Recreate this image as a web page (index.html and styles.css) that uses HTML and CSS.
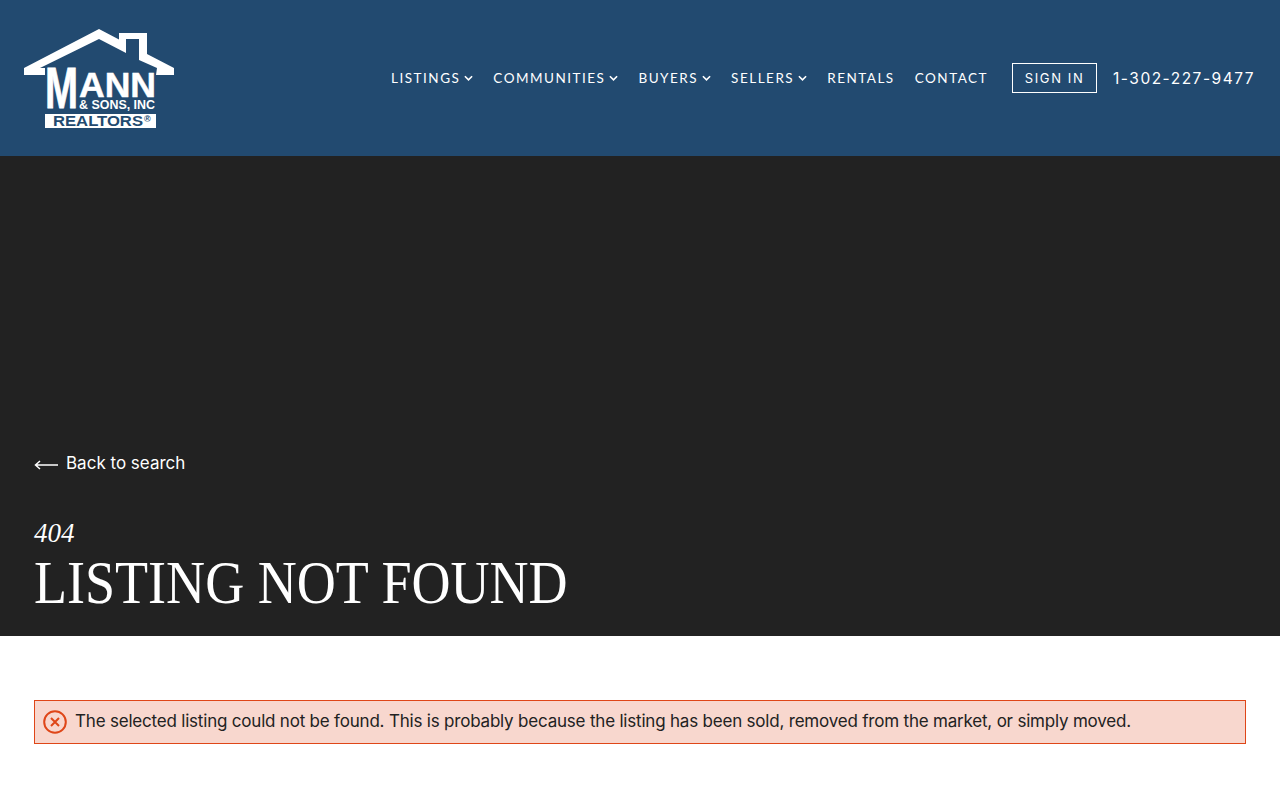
FILE: index.html
```html
<!DOCTYPE html>
<html lang="en">
<head>
  <meta charset="UTF-8" />
  <title>Listing Not Found</title>
  <link rel="stylesheet" href="styles.css">
</head>
<body>

  <!-- Header -->
  <header class="site-header">
    <a class="logo" href="#">
      <svg width="150" height="100" viewBox="24 28 150 100">
        <path fill="#fff" d="M24 68 L99 29 L119 39.5 L119 33 L147 33 L147 54 L174 68 L174 75 L156 75 L157 68 L139 60 L139 39 L126 39 L126 53 L99 39 L40 68 L45 68 L45 75 L24 75 Z"/>
        <rect x="45" y="114" width="111" height="14" fill="#fff"/>
        <text class="logo-m" x="45" y="108" textLength="33" lengthAdjust="spacingAndGlyphs">M</text>
        <text class="logo-ann" x="79" y="97" textLength="77" lengthAdjust="spacingAndGlyphs">ANN</text>
        <text class="logo-sons" x="79" y="109" textLength="76" lengthAdjust="spacingAndGlyphs">&amp; SONS, INC</text>
        <text class="logo-realtors" x="53" y="126" textLength="90" lengthAdjust="spacingAndGlyphs">REALTORS</text>
        <text class="logo-reg" x="144" y="122">®</text>
      </svg>
    </a>
    <nav class="main-nav">
      <a class="nav-link" href="#">LISTINGS<svg class="chev" viewBox="0 0 10 6"><path d="M1 1l4 4 4-4"/></svg></a>
      <a class="nav-link" href="#">COMMUNITIES<svg class="chev" viewBox="0 0 10 6"><path d="M1 1l4 4 4-4"/></svg></a>
      <a class="nav-link" href="#">BUYERS<svg class="chev" viewBox="0 0 10 6"><path d="M1 1l4 4 4-4"/></svg></a>
      <a class="nav-link" href="#">SELLERS<svg class="chev" viewBox="0 0 10 6"><path d="M1 1l4 4 4-4"/></svg></a>
      <a class="nav-link" href="#">RENTALS</a>
      <a class="nav-link" href="#">CONTACT</a>
      <a class="sign-in" href="#">SIGN IN</a>
      <a class="phone" href="#">1-302-227-9477</a>
    </nav>
  </header>

  <!-- Hero -->
  <section class="hero">
    <a class="back-link" href="#">
      <svg width="24" height="10" viewBox="0 0 24 10"><path d="M24 5H2M6 1L1.5 5 6 9"/></svg>
      Back to search
    </a>
    <div class="code">404</div>
    <h1>LISTING NOT FOUND</h1>
  </section>

  <!-- Message -->
  <main class="content">
    <div class="alert">
      <svg width="24" height="24" viewBox="0 0 24 24"><circle cx="12" cy="12" r="10.8"/><path d="M8 8l8 8M16 8l-8 8"/></svg>
      <span>The selected listing could not be found. This is probably because the listing has been sold, removed from the market, or simply moved.</span>
    </div>
  </main>

</body>
</html>
```

FILE: styles.css
```css
html, body {
  margin: 0; padding: 0; height: 100%;
  font-family: Inter, "Noto Sans", sans-serif;
  overflow: hidden;
  background: #fff;
  color: #222;
}
a {
  color: inherit;
  text-decoration: none;
}
.site-header {
  display: flex;
  align-items: center;
  justify-content: space-between;
  height: 156px;
  padding: 0 25px 0 24px;
  background: #224a70;
  color: #fff;
}
.logo {
  display: block;
  height: 100px;
}
.logo text {
  font-family: "Liberation Sans", Arial, sans-serif;
  font-weight: 700;
  fill: #fff;
}
.logo-m {
  font-size: 57px;
  stroke: #fff;
  stroke-width: 0.8;
}
.logo-ann {
  font-size: 35px;
  stroke: #fff;
  stroke-width: 0.5;
}
.logo-sons {
  font-size: 12.5px;
}
.logo .logo-realtors {
  font-size: 14px;
  fill: #224a70;
}
.logo .logo-reg {
  font-size: 9px;
  fill: #224a70;
}
.main-nav {
  display: flex;
  align-items: center;
}
.nav-link {
  display: flex;
  align-items: center;
  margin-right: 20px;
  font-family: Lato, Inter, sans-serif;
  font-size: 13.5px;
  letter-spacing: 1.5px;
  white-space: nowrap;
}
.chev {
  width: 9px;
  height: 6px;
  margin-left: 4px;
  fill: none;
  stroke: #fff;
  stroke-width: 1.8;
}
.sign-in {
  box-sizing: border-box;
  width: 85px;
  height: 30px;
  margin-left: 4px;
  border: 1px solid #fff;
  font-size: 13px;
  line-height: 28px;
  text-align: center;
  letter-spacing: 1.6px;
}
.phone {
  margin-left: 16px;
  font-size: 15.5px;
  letter-spacing: 1.5px;
  white-space: nowrap;
}
.hero {
  display: flex;
  flex-direction: column;
  justify-content: flex-end;
  box-sizing: border-box;
  height: 480px;
  padding: 0 34px 21px;
  background: #222;
  color: #fff;
}
.back-link {
  display: flex;
  align-items: center;
  gap: 8px;
  font-size: 17px;
  line-height: 26px;
}
.back-link svg {
  fill: none;
  stroke: #fff;
  stroke-width: 1.5;
  margin-top: 4px;
}
.code {
  margin-top: 42px;
  font-family: "Liberation Serif", serif;
  font-style: italic;
  font-size: 27px;
  line-height: 31px;
}
h1 {
  margin: 0;
  font-family: "Liberation Serif", serif;
  font-weight: 400;
  font-size: 62px;
  line-height: 66px;
  white-space: nowrap;
  transform: scaleX(0.872);
  transform-origin: left;
}
.content {
  padding: 64px 34px 0;
}
.alert {
  display: flex;
  align-items: center;
  gap: 8px;
  box-sizing: border-box;
  height: 44px;
  padding: 0 8px;
  background: #f8d7ce;
  border: 1px solid #df4618;
  font-size: 17px;
  letter-spacing: -0.2px;
  white-space: nowrap;
}
.alert span {
  margin-top: -2px;
}
.alert svg {
  flex: none;
  fill: none;
  stroke: #df4618;
  stroke-width: 2;
}
```
